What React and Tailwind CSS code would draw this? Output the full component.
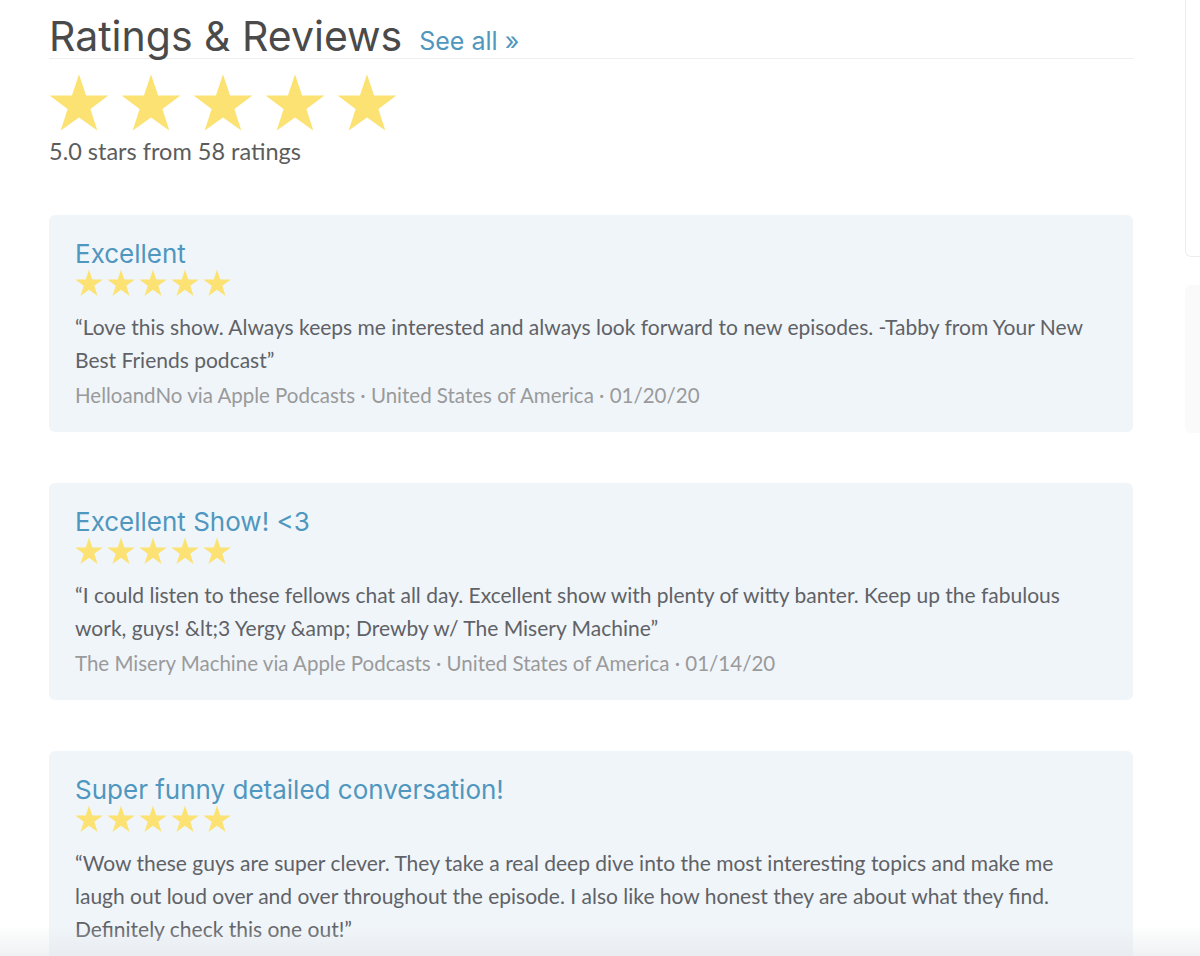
const REVIEWS = [
  {
    title: 'Excellent',
    body: '“Love this show. Always keeps me interested and always look forward to new episodes. -Tabby from Your New Best Friends podcast”',
    author: 'HelloandNo',
    date: '01/20/20',
  },
  {
    title: 'Excellent Show! <3',
    body: '“I could listen to these fellows chat all day. Excellent show with plenty of witty banter. Keep up the fabulous work, guys! &lt;3 Yergy &amp; Drewby w/ The Misery Machine”',
    author: 'The Misery Machine',
    date: '01/14/20',
  },
  {
    title: 'Super funny detailed conversation!',
    body: '“Wow these guys are super clever. They take a real deep dive into the most interesting topics and make me laugh out loud over and over throughout the episode. I also like how honest they are about what they find. Definitely check this one out!”',
  },
];

const heading = { fontFamily: 'Inter, "Open Sans", sans-serif' };
const text = { fontFamily: 'Lato, "Open Sans", sans-serif' };

function Star({ size }) {
  return (
    <svg width={size} height={size} viewBox="0 0 100 100" className="shrink-0">
      <polygon
        points="50,2 61.8,37.5 99,37.5 69,59.8 80.5,96 50,74 19.5,96 31,59.8 1,37.5 38.2,37.5"
        fill="#fbe272"
      />
    </svg>
  );
}

function Stars({ size, gap }) {
  return (
    <div className={`flex ${gap}`}>
      {[0, 1, 2, 3, 4].map((i) => (
        <Star key={i} size={size} />
      ))}
    </div>
  );
}

function ReviewCard({ review }) {
  return (
    <div className="min-h-[217px] rounded-md bg-[#f0f5fa] px-[26px] pb-[20px] pt-[24px]">
      <h3 className="text-[26px] leading-[30px] font-normal text-[#4f97be]" style={heading}>
        {review.title}
      </h3>
      <Stars size={28} gap="gap-[4px]" />
      <p className="mt-[13px] text-[21px] leading-[33px] text-[#5f6266]" style={text}>
        {review.body}
      </p>
      {review.author && (
        <p className="mt-[3px] text-[20.5px] leading-[33px] text-[#9a9a9a]" style={text}>
          {review.author} via Apple Podcasts · United States of America · {review.date}
        </p>
      )}
    </div>
  );
}

export default function App() {
  return (
    <div className="relative h-[956px] overflow-hidden bg-white">
      <div className="flex">
        <main className="ml-[49px] w-[1084px]">
          <div className="flex items-end gap-[17px] border-b border-[#eeeeee] pt-[14px]">
            <h2 className="text-[41px] leading-[44px] font-normal text-[#4a4a4a]" style={heading}>
              Ratings &amp; Reviews
            </h2>
            <a className="text-[25px] leading-[34px] text-[#4f97be]" style={heading}>
              See all »
            </a>
          </div>
          <div className="mt-[14px]">
            <Stars size={60} gap="gap-[12px]" />
          </div>
          <p className="mt-[3px] text-[23.5px] leading-[30px] text-[#5c5c5c]" style={text}>
            5.0 stars from 58 ratings
          </p>
          <div className="mt-[49px] flex flex-col gap-[51px]">
            {REVIEWS.map((r) => (
              <ReviewCard key={r.title} review={r} />
            ))}
          </div>
        </main>
        <aside className="ml-[52px] flex-1">
          <div className="h-[257px] rounded-bl-md border-b border-l border-[#ededed]" />
          <div className="mt-[28px] h-[148px] rounded-l-md bg-[#fafafa]" />
        </aside>
      </div>
      <div className="pointer-events-none absolute bottom-0 left-0 right-0 h-[30px] bg-gradient-to-b from-transparent to-[#e4e7ea]/60" />
    </div>
  );
}
